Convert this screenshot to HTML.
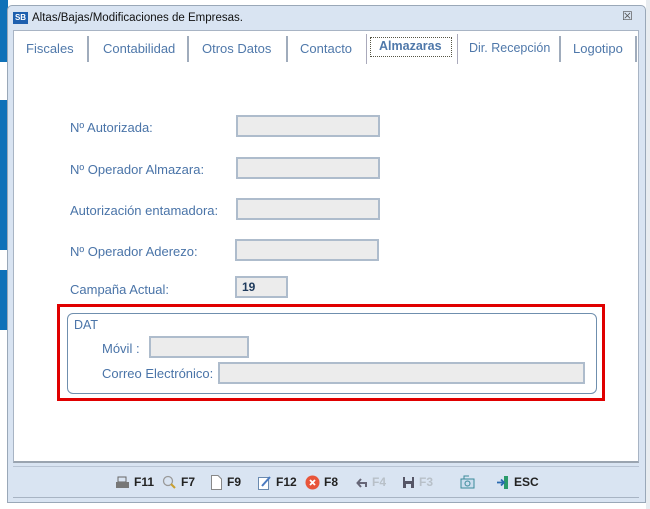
<!DOCTYPE html>
<html><head><meta charset="utf-8"><style>
*{margin:0;padding:0;box-sizing:border-box}
body{width:650px;height:509px;position:relative;overflow:hidden;background:#fff;font-family:"Liberation Sans",sans-serif}
.a{position:absolute}
.win{left:7px;top:5px;width:639px;height:498px;background:#d9e4f2;border:1px solid #9aa8b8;border-radius:5px 5px 0 0}
.title{left:32px;top:12px;font-size:11.5px;color:#111}
.panel{left:13px;top:30px;width:626px;height:433px;background:#fff;border:1px solid #a8b4c4;border-bottom:2px solid #9aa4b0}
.tab{position:absolute;top:41px;font-size:13px;color:#4f78aa}
.sep{position:absolute;top:36px;width:2px;height:26px;background:#a0acbc}
.lbl{position:absolute;font-size:13px;color:#4a74a8}
.inp{position:absolute;height:22px;background:#ececec;border:2px solid #aebccc}
.tb{position:absolute;top:474px;height:16px;display:flex;align-items:center;gap:4px;font-size:12px;font-weight:bold;color:#222}
.dis{color:#b8c0c8}
</style></head><body>
<div class="a" style="left:0;top:0;width:8px;height:62px;background:#0f71b8"></div>
<div class="a" style="left:0;top:100px;width:8px;height:150px;background:#0f71b8"></div>
<div class="a" style="left:0;top:270px;width:8px;height:60px;background:#0f71b8"></div>
<div class="a" style="left:646px;top:0;width:4px;height:509px;background:#e8ecf0"></div>
<div class="a win"></div>
<div class="a" style="left:13px;top:12px;width:15px;height:12px;background:#1d5fae;color:#fff;font-size:8px;font-weight:bold;line-height:12px;text-align:center">SB</div>
<div class="a title">Altas/Bajas/Modificaciones de Empresas.</div>
<div class="a" style="left:622px;top:9px;font-size:12px;color:#555">☒</div>
<div class="a panel"></div>
<div class="tab" style="left:26px">Fiscales</div>
<div class="sep" style="left:87px"></div>
<div class="tab" style="left:103px">Contabilidad</div>
<div class="sep" style="left:187px"></div>
<div class="tab" style="left:202px">Otros Datos</div>
<div class="sep" style="left:286px"></div>
<div class="tab" style="left:300px">Contacto</div>
<div class="a" style="left:366px;top:34px;width:92px;height:30px;background:#fff;border-left:1px solid #aab;border-right:1px solid #aab"></div>
<div class="a" style="left:370px;top:37px;width:82px;height:20px;border:1px dotted #554"></div>
<div class="tab" style="left:379px;top:39px;font-weight:bold;font-size:12.5px">Almazaras</div>
<div class="tab" style="left:469px;font-size:12.5px">Dir. Recepción</div>
<div class="sep" style="left:559px"></div>
<div class="tab" style="left:573px">Logotipo</div>
<div class="sep" style="left:635px"></div>

<div class="lbl" style="left:70px;top:120px">Nº Autorizada:</div>
<div class="inp" style="left:236px;top:115px;width:144px"></div>
<div class="lbl" style="left:70px;top:162px">Nº Operador Almazara:</div>
<div class="inp" style="left:236px;top:157px;width:144px"></div>
<div class="lbl" style="left:70px;top:203px">Autorización entamadora:</div>
<div class="inp" style="left:236px;top:198px;width:144px"></div>
<div class="lbl" style="left:70px;top:244px">Nº Operador Aderezo:</div>
<div class="inp" style="left:235px;top:239px;width:144px"></div>
<div class="lbl" style="left:70px;top:282px">Campaña Actual:</div>
<div class="inp" style="left:235px;top:276px;width:53px;font-size:12px;font-weight:bold;color:#1e3a5c;padding:2px 0 0 5px">19</div>

<div class="a" style="left:57px;top:304px;width:548px;height:97px;border:3px solid #e00000"></div>
<div class="a" style="left:67px;top:313px;width:530px;height:81px;border:1px solid #6f8fae;border-radius:6px"></div>
<div class="lbl" style="left:74px;top:318px;font-size:12.5px">DAT</div>
<div class="lbl" style="left:102px;top:341px">Móvil :</div>
<div class="inp" style="left:149px;top:336px;width:100px"></div>
<div class="lbl" style="left:102px;top:366px">Correo Electrónico:</div>
<div class="inp" style="left:218px;top:362px;width:367px"></div>

<div class="a" style="left:13px;top:466px;width:626px;height:1px;background:#b8c4d4"></div>
<div class="a" style="left:13px;top:497px;width:626px;height:1px;background:#a8b4c4"></div>

<div class="tb" style="left:115px"><svg width="15" height="13"><rect x="3" y="1" width="8" height="5" fill="none" stroke="#666"/><rect x="1" y="6" width="13" height="6" fill="#777"/></svg>F11</div>
<div class="tb" style="left:162px"><svg width="15" height="14"><circle cx="6" cy="6" r="4.5" fill="none" stroke="#999" stroke-width="1.3"/><line x1="9" y1="9" x2="13" y2="13" stroke="#c9a030" stroke-width="2"/></svg>F7</div>
<div class="tb" style="left:210px"><svg width="13" height="15"><path d="M1.5 .5H8L11.5 4V14.5H1.5Z" fill="#fff" stroke="#888"/></svg>F9</div>
<div class="tb" style="left:257px"><svg width="15" height="15"><rect x="1.5" y="2.5" width="10" height="12" fill="#fff" stroke="#6a8ab0"/><path d="M5 11L13 2" stroke="#4a7ac0" stroke-width="2"/></svg>F12</div>
<div class="tb" style="left:305px"><svg width="15" height="15"><circle cx="7.5" cy="7.5" r="7" fill="#e8553a"/><path d="M5 5L10 10M10 5L5 10" stroke="#fff" stroke-width="1.8"/></svg>F8</div>
<div class="tb dis" style="left:355px"><svg width="13" height="13"><path d="M11 11V7H3M6 3L2.5 7L6 11" fill="none" stroke="#667" stroke-width="2"/></svg>F4</div>
<div class="tb dis" style="left:402px"><svg width="13" height="13"><rect x="1" y="1" width="11" height="11" fill="#556"/><rect x="3" y="1" width="7" height="4" fill="#d9e4f2"/><rect x="4" y="8" width="5" height="4" fill="#d9e4f2"/></svg>F3</div>
<div class="tb" style="left:460px"><svg width="15" height="14"><rect x="1" y="4" width="13" height="9" fill="#cde" stroke="#3a8a9a"/><circle cx="7.5" cy="8.5" r="2.5" fill="none" stroke="#3a8a9a"/><path d="M4 4V1H9" fill="none" stroke="#3a8a9a"/></svg></div>
<div class="tb" style="left:496px"><svg width="14" height="15"><rect x="8" y="1" width="4" height="13" fill="#2a9a6a"/><path d="M1 7.5H8M5 4.5L8 7.5L5 10.5" fill="none" stroke="#2a6ab0" stroke-width="1.8"/></svg>ESC</div>
</body></html>
